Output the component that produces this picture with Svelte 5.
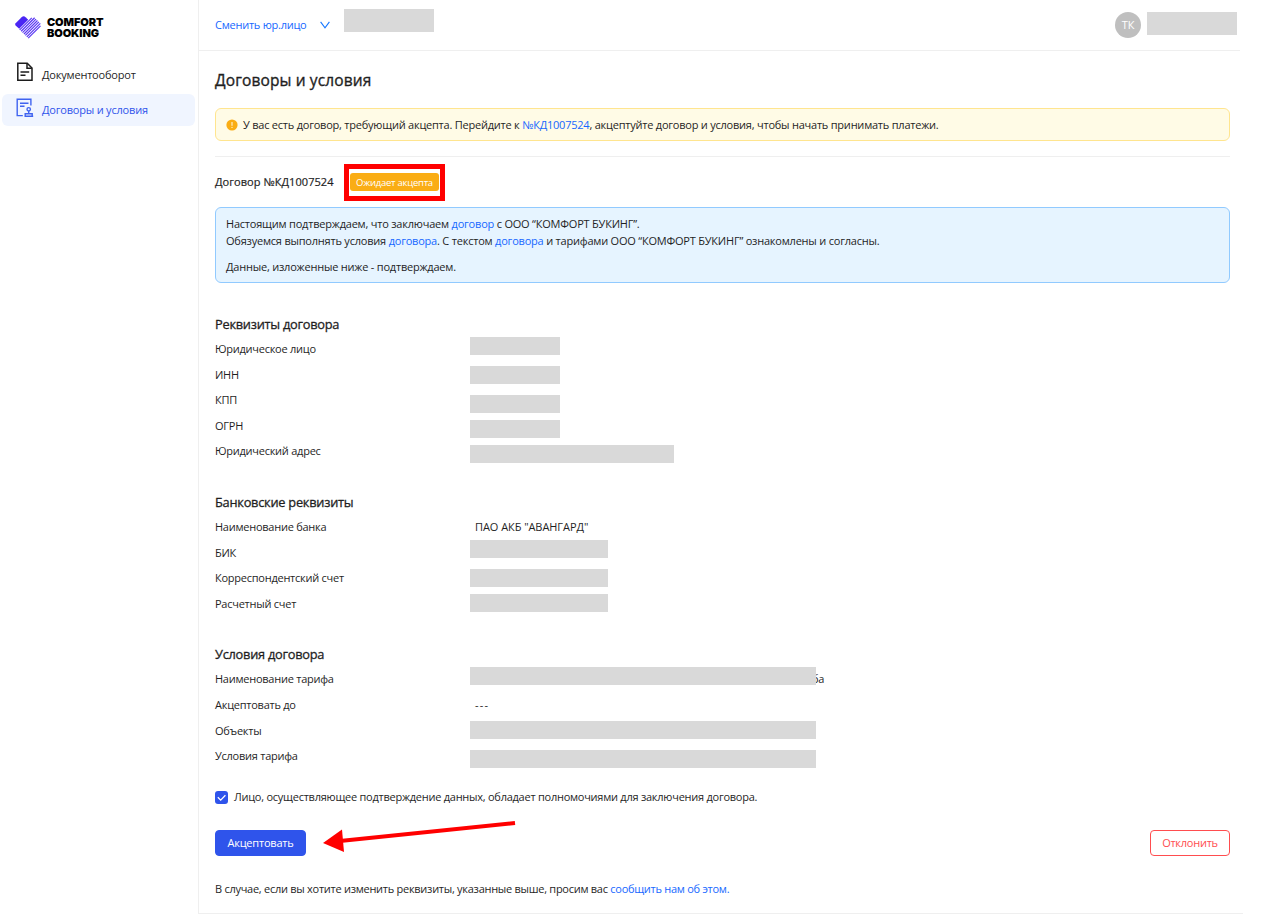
<script>
    const sections = [
        {
            title: 'Реквизиты договора',
            rows: ['Юридическое лицо', 'ИНН', 'КПП', 'ОГРН', 'Юридический адрес'],
            values: [
                { width: 90, gap: 0 },
                { width: 90, gap: 11 },
                { width: 90, gap: 11 },
                { width: 90, gap: 7 },
                { width: 204, gap: 7 }
            ]
        },
        {
            title: 'Банковские реквизиты',
            rows: ['Наименование банка', 'БИК', 'Корреспондентский счет', 'Расчетный счет'],
            values: [
                { text: 'ПАО АКБ "АВАНГАРД"', gap: 3 },
                { width: 138, gap: 4 },
                { width: 138, gap: 11 },
                { width: 138, gap: 7 }
            ]
        },
        {
            title: 'Условия договора',
            rows: ['Наименование тарифа', 'Акцептовать до', 'Объекты', 'Условия тарифа'],
            values: [
                { width: 346, gap: 0, tail: 'ба' },
                { text: '---', gap: 11, empty: true },
                { width: 346, gap: 7 },
                { width: 346, gap: 11 }
            ]
        }
    ];

    const stripes = [0, 1, 2, 3, 4, 5, 6];
    let accepted = true;
</script>

<div class="page">
    <aside class="sidebar">
        <div class="logo">
            <svg width="30" height="26" viewBox="0 0 30 26">
                <path d="M1.6 9.2 7.600 3.200Q9.600 1.500 11.600 3.200L14.200 5.800 5.2 14.800 1.6 11.6Q.6 10.4 1.6 9.2Z" fill="#4a25f4" />
                {#each stripes as i}
                    <path
                        d="M{5.700 + i * 1.42} {15.900 + i * 1.38}L{(i === 0 ? 17.800 : 19.2) + i * 1.42 - (i === 6 ? 1.2 : 0)} {(i === 0 ? 3.800 : 2.400) + i * 1.38 + (i === 6 ? 1.2 : 0)}"
                        stroke="#5a38f2"
                        stroke-width="1.2"
                    />
                {/each}
            </svg>
            <span class="logo-text">COMFORT<br />BOOKING</span>
        </div>
        <nav>
            <a class="nav-item" href="#documents">
                <svg width="18" height="20" viewBox="0 0 18 20" fill="none" stroke="#1c1c1c" stroke-width="1.5">
                    <path d="M1.8 1.2h9.4l4.8 4.8v12.3H1.8z" />
                    <path d="M11 1.5v4.8h4.8M4.5 10.1h8.7M4.5 13.3h5" />
                </svg>
                <span>Документооборот</span>
            </a>
            <a class="nav-item active" href="#contracts">
                <svg width="18" height="20" viewBox="0 0 18 20" fill="none" stroke="#3f63f0" stroke-width="1.4">
                    <path d="M6.8 17.6H1.2V1.2h13.7v6.3" />
                    <path d="M4 5.3h8.5M4 8.3h4.5" />
                    <circle cx="12.7" cy="11.3" r="1.7" />
                    <path d="M12.7 13v2.2M9.2 18.1v-2.4h7v2.4zM8.5 18.2h8.7" />
                </svg>
                <span>Договоры и условия</span>
            </a>
        </nav>
    </aside>

    <div class="main">
        <header class="topbar">
            <a class="switch" href="#switch">Сменить юр.лицо</a>
            <svg class="chevron" width="10" height="8" viewBox="0 0 10 8" fill="none" stroke="#1677ff" stroke-width="1.1">
                <path d="M.6 .8 5 6.8 9.4 .8" />
            </svg>
            <div class="stub company"></div>
            <div class="avatar">ТК</div>
            <div class="stub user"></div>
        </header>

        <main class="content">
            <h1>Договоры и условия</h1>

            <div class="warning">
                <svg width="12" height="12" viewBox="0 0 12 12">
                    <circle cx="6" cy="6" r="5.6" fill="#faad14" />
                    <path d="M6 3v3.8M6 7.9v1.1" stroke="#fffbe6" stroke-width="1" />
                </svg>
                <span>У вас есть договор, требующий акцепта. Перейдите к <a href="#contract">№КД1007524</a>, акцептуйте договор и условия, чтобы начать принимать платежи.</span>
            </div>

            <div class="contract">
                <span class="contract-name">Договор №КД1007524</span>
                <span class="highlight"><span class="tag">Ожидает акцепта</span></span>
            </div>

            <div class="info">
                <p>Настоящим подтверждаем, что заключаем <a href="#contract">договор</a> с ООО “КОМФОРТ БУКИНГ”.</p>
                <p>Обязуемся выполнять условия <a href="#contract">договора</a>. С текстом <a href="#contract">договора</a> и тарифами ООО “КОМФОРТ БУКИНГ” ознакомлены и согласны.</p>
                <p class="last">Данные, изложенные ниже - подтверждаем.</p>
            </div>

            {#each sections as section}
                <section>
                    <h2>{section.title}</h2>
                    <div class="details">
                        <div class="labels">
                            {#each section.rows as row}
                                <div class="label">{row}</div>
                            {/each}
                        </div>
                        <div class="values">
                            {#each section.values as value}
                                <div class="value" style="margin-top: {value.gap}px">
                                    {#if value.text}
                                        <span class="value-text" class:empty={value.empty}>{value.text}</span>
                                    {:else}
                                        <div class="stub" style="width: {value.width}px"></div>
                                        {#if value.tail}
                                            <span class="tail">{value.tail}</span>
                                        {/if}
                                    {/if}
                                </div>
                            {/each}
                        </div>
                    </div>
                </section>
            {/each}

            <label class="confirm">
                <input type="checkbox" bind:checked={accepted} />
                <span class="box">
                    {#if accepted}
                        <svg width="13" height="13" viewBox="0 0 13 13" fill="none" stroke="#fff" stroke-width="1.3">
                            <path d="m2.800 6.2 2.900 2.900 4.700-4.900" />
                        </svg>
                    {/if}
                </span>
                <span class="confirm-text">Лицо, осуществляющее подтверждение данных, обладает полномочиями для заключения договора.</span>
            </label>

            <div class="actions">
                <button class="accept">Акцептовать</button>
                <svg class="arrow" width="196" height="36" viewBox="0 0 196 36">
                    <path d="M20 21 195 3" stroke="#f00" stroke-width="4" />
                    <path d="M3 23 22 9.500 24 32z" fill="#f00" />
                </svg>
                <button class="decline">Отклонить</button>
            </div>

            <p class="note">В случае, если вы хотите изменить реквизиты, указанные выше, просим вас <a href="#report">сообщить нам об этом.</a></p>
        </main>
    </div>
</div>

<style>
    :global(body) {
        background: #fff;
    }

    .page {
        display: flex;
        width: 1282px;
        height: 916px;
        overflow: hidden;
        font-family: "Open Sans", "Noto Sans", sans-serif;
        font-size: 11px;
        letter-spacing: -0.25px;
        color: #1f1f1f;
    }

    a {
        color: #1668ff;
        text-decoration: none;
    }

    .sidebar {
        box-sizing: border-box;
        width: 199px;
        height: 914px;
        border-right: 1px solid #efefef;
    }

    .logo {
        display: flex;
        height: 80px;
        padding: 14px 0 0 14px;
        box-sizing: border-box;
    }

    .logo-text {
        margin: 3px 0 0 3px;
        font-family: Inter, sans-serif;
        font-size: 11px;
        font-weight: 900;
        line-height: 11px;
        letter-spacing: -0.1px;
        color: #000;
    }

    nav {
        display: flex;
        flex-direction: column;
        gap: 3px;
        margin-top: -21px;
        padding: 0 3px 0 2px;
    }

    .nav-item {
        display: flex;
        align-items: center;
        box-sizing: border-box;
        height: 32px;
        padding-left: 14px;
        border-radius: 6px;
        color: #1f1f1f;
        letter-spacing: -0.2px;
    }

    .nav-item svg {
        margin-top: -6px;
    }

    .nav-item.active svg {
        margin-top: -4px;
    }

    .nav-item span {
        margin: -2px 0 0 8px;
    }

    .nav-item.active {
        background: #f0f5ff;
        color: #2f54eb;
    }

    .main {
        box-sizing: border-box;
        width: 1044px;
        height: 914px;
        border-bottom: 1px solid #efefef;
    }

    .topbar {
        display: flex;
        align-items: center;
        box-sizing: border-box;
        width: 1041px;
        height: 51px;
        padding-left: 16px;
        border-bottom: 1px solid #efefef;
    }

    .switch {
        width: 105px;
        margin-top: -2px;
    }

    .stub {
        position: relative;
        z-index: 1;
        height: 18px;
        background: #d9d9d9;
    }

    .company {
        width: 90px;
        height: 23px;
        margin: -10px 0 0 14px;
    }

    .avatar {
        width: 26px;
        height: 26px;
        margin-left: auto;
        border-radius: 50%;
        background: #bfbfbf;
        color: #fff;
        line-height: 26px;
        text-align: center;
    }

    .user {
        width: 90px;
        height: 23px;
        margin: -3px 3px 0 6px;
    }

    .content {
        width: 1015px;
        margin-left: 16px;
    }

    h1 {
        margin: 0;
        padding-top: 17px;
        height: 40px;
        font-size: 15.500px;
        font-weight: 500;
        line-height: 25px;
        letter-spacing: 0.12px;
        -webkit-text-stroke: 0.35px currentColor;
    }

    .warning {
        display: flex;
        align-items: center;
        box-sizing: border-box;
        height: 33px;
        padding-left: 10px;
        border: 1px solid #ffe58f;
        border-radius: 6px;
        background: #fffbe6;
    }

    .warning span {
        margin-left: 5px;
        letter-spacing: -0.225px;
    }

    .contract {
        display: flex;
        align-items: center;
        box-sizing: border-box;
        height: 51px;
        margin-top: 15px;
        border-top: 1px solid #efefef;
    }

    .contract-name {
        width: 129px;
        margin-top: -2px;
        letter-spacing: 0.06px;
        -webkit-text-stroke: 0.2px currentColor;
    }

    .highlight {
        box-sizing: border-box;
        width: 101px;
        height: 37px;
        padding: 4px 1px;
        border: 5px solid #f00;
    }

    .tag {
        display: block;
        width: 89px;
        height: 18px;
        border-radius: 3px;
        background: #faad14;
        color: #fff;
        font-size: 9.500px;
        line-height: 19px;
        text-align: center;
    }

    .info {
        box-sizing: border-box;
        height: 76px;
        padding: 7px 10px;
        border: 1px solid #91caff;
        border-radius: 6px;
        background: #e6f4ff;
        letter-spacing: -0.21px;
    }

    .info p {
        margin: 0;
        line-height: 17px;
    }

    .info .last {
        margin-top: 9px;
    }

    section {
        margin-top: 28px;
    }

    section:first-of-type {
        margin-top: 32px;
    }

    h2 {
        margin: 0;
        height: 22px;
        font-size: 12.800px;
        font-weight: 500;
        line-height: 19px;
        -webkit-text-stroke: 0.3px currentColor;
    }

    .details {
        display: flex;
    }

    .labels {
        width: 255px;
    }

    .label {
        height: 25.600px;
        line-height: 24px;
    }

    .value {
        display: flex;
        height: 18px;
        line-height: 18px;
    }

    .value-text {
        margin-left: 5px;
        letter-spacing: -0.06px;
    }

    .value-text.empty {
        letter-spacing: 1.2px;
    }

    .tail {
        margin: 3px 0 0 -4px;
    }

    .confirm {
        display: flex;
        align-items: center;
        height: 16px;
        margin-top: 20px;
    }

    .confirm input {
        display: none;
    }

    .box {
        width: 13px;
        height: 13px;
        border-radius: 3px;
        background: #2f54eb;
    }

    .box svg {
        display: block;
    }

    .confirm-text {
        margin: -2px 0 0 6px;
    }

    .actions {
        position: relative;
        display: flex;
        justify-content: space-between;
        margin-top: 24px;
    }

    .arrow {
        position: absolute;
        left: 105px;
        top: -10px;
    }

    button {
        box-sizing: border-box;
        height: 26px;
        padding: 0;
        border: 1px solid #2f54eb;
        border-radius: 4px;
        font: inherit;
        cursor: pointer;
    }

    .accept {
        width: 91px;
        background: #2f54eb;
        color: #fff;
        letter-spacing: -0.2px;
    }

    .decline {
        width: 80px;
        border-color: #ff4d4f;
        background: #fff;
        color: #ff4d4f;
        letter-spacing: -0.25px;
    }

    .note {
        margin: 25px 0 0;
        line-height: 16px;
        letter-spacing: -0.27px;
    }
</style>
